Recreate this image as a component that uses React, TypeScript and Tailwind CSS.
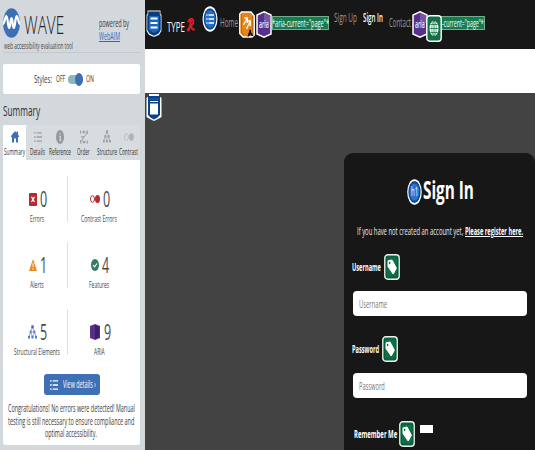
import React, { useLayoutEffect, useRef } from "react";

// Condensed text: the label is squeezed horizontally to the width of its box.
function Fit({ className = "", children }: { className?: string; children: React.ReactNode }) {
  const box = useRef<HTMLSpanElement>(null);
  const text = useRef<HTMLSpanElement>(null);
  useLayoutEffect(() => {
    const fit = () => {
      if (!box.current || !text.current) return;
      text.current.style.transform = `scaleX(${box.current.clientWidth / text.current.offsetWidth})`;
    };
    fit();
    document.fonts?.ready.then(fit);
  }, []);
  return (
    <span ref={box} className={`block shrink-0 whitespace-nowrap ${className}`}>
      <span ref={text} className="inline-block origin-left align-top">{children}</span>
    </span>
  );
}

function Svg({ className, box, children }: { className: string; box: string; children: React.ReactNode }) {
  return (
    <svg className={`block shrink-0 ${className}`} viewBox={box} preserveAspectRatio="none" fill="none">
      {children}
    </svg>
  );
}

function HeaderBadge({ className }: { className: string }) {
  return (
    <Svg className={`h-[28px] w-[16px] ${className}`} box="0 0 16 28">
      <path d="M1.5 1.5H14.5V5L15.5 6V22L13 26L8 28L3 26L.5 22V6L1.5 5Z" fill="#dfe9f2" />
      <path d="M2.2 2.5H13.8V5.5L14.7 7V21L12.5 24.5L8 26.8L3.5 24.5L1.3 21V7L2.2 5.5Z" fill="#0b3b79" />
      <path d="M3 7H13V21L8 24L3 21Z" fill="#1c66bd" />
      <path d="M4.5 9.5H11.5M4.5 14H11.5M4.5 18.5H11.5" stroke="#fff" strokeWidth="2.2" />
    </Svg>
  );
}

function AriaBadge({ className }: { className: string }) {
  return (
    <span className={`relative block h-[27px] w-[16px] shrink-0 ${className}`}>
      <Svg className="h-[27px] w-[16px]" box="0 0 16 27">
        <path d="M8 .8L15 4V23L8 26.2L1 23V4Z" fill="#55318b" stroke="#fff" strokeWidth="1.5" />
        <path d="M8 2L14.2 5V12L8 15Z" fill="#7856a3" />
      </Svg>
      <Fit className="absolute left-[3px] top-[5px] w-[10px] text-[11px] font-semibold leading-[16px] text-[#eee7fa]">aria</Fit>
    </span>
  );
}

function TagBadge({ className = "" }: { className?: string }) {
  return (
    <Svg className={`h-[26px] w-[16px] ${className}`} box="0 0 16 26">
      <rect x=".8" y=".8" width="14.4" height="24.4" rx="3" fill="#107047" stroke="#e9f3ec" strokeWidth="1.4" />
      <rect x="2.3" y="3" width="11.4" height="20" rx="1.5" stroke="#0a5636" />
      <path d="M4 6.8L8 6L12.4 14.2L9.2 20L4 12.5Z" fill="#fff" stroke="#fff" strokeLinejoin="round" />
      <ellipse cx="5.6" cy="9" rx=".8" ry="1.2" fill="#107047" />
    </Svg>
  );
}

const ListIcon = ({ className, color }: { className: string; color: string }) => (
  <Svg className={className} box="0 0 9 13">
    <path d="M0 2H1.8M3 2H9M0 6.5H1.8M3 6.5H9M0 11H1.8M3 11H9" stroke={color} strokeWidth="1.4" />
  </Svg>
);

const TreeIcon = ({ className, color, top }: { className: string; color: string; top: string }) => (
  <Svg className={className} box="0 0 9 14">
    <path d="M4.5 2L2.5 7L1 12M4.5 2L6.5 7L8 12M2.5 7H6.5M2.5 7L4.5 12L6.5 7" stroke={color} strokeWidth=".6" />
    <path d="M3.5 .5H5.5V3.5H3.5ZM1.7 5.5H3.5V8.3H1.7ZM5.5 5.5H7.3V8.3H5.5ZM0 10.7H2V13.5H0ZM3.5 10.7H5.5V13.5H3.5ZM7 10.7H9V13.5H7Z" fill={color} />
    <path d="M3.5 .5H5.5V3H3.5Z" fill={top} />
  </Svg>
);

function Tab({ box, label, text, children }: { box: string; label: string; text: string; children: React.ReactNode }) {
  return (
    <div className={`flex h-[35px] shrink-0 flex-col items-center ${box}`}>
      <div className="flex h-[21px] items-center pt-[2px]">{children}</div>
      <Fit className={`text-[8.5px] font-medium leading-[12px] text-[#30343a] ${label}`}>{text}</Fit>
    </div>
  );
}

function Stat({ pad, n, nWidth, text, label, children }: { pad: string; n: string; nWidth: string; text: string; label: string; children: React.ReactNode }) {
  return (
    <div className="w-[64px] shrink-0">
      <div className={`flex h-[32px] items-center ${pad}`}>
        <div className="flex w-[11px] shrink-0 items-center">{children}</div>
        <Fit className={`text-[21.5px] leading-[32px] text-[#484848] ${nWidth}`}>{n}</Fit>
      </div>
      <Fit className={`text-[9.5px] leading-[13px] text-[#444] ${label}`}>{text}</Fit>
    </div>
  );
}

function Sidebar() {
  return (
    <aside className="h-[450px] w-[145px] shrink-0 bg-[#d3d8dd] pl-[3px]">
      <div className="flex h-[53px] w-[137px] border-b border-[#c3c9cf]">
        <div className="w-[96px] shrink-0">
          <div className="flex h-[40px] pt-[8px]">
            <Svg className="h-[30px] w-[17px]" box="0 0 17 30">
              <ellipse cx="8.5" cy="15" rx="8.5" ry="14.8" fill="#3e6fb4" />
              <path d="M0 16C1.6 16 2 8 3.3 8C5 8 4.6 20 6.2 20C7.7 20 7 10 8.5 10C10 10 9.3 20 10.8 20C12.4 20 12 8 13.7 8C15 8 15.4 16 17 16" stroke="#fff" strokeWidth="2.2" />
            </Svg>
            <Fit className="ml-[4px] mt-[4px] w-[40px] text-[26px] font-light leading-[24px] text-[#222]">WAVE</Fit>
          </div>
          <Fit className="ml-px w-[69px] text-[8.5px] leading-[12px] text-[#3f444a]">web accessibility evaluation tool</Fit>
        </div>
        <div className="pt-[17px] text-[10px] leading-[13px]">
          <Fit className="w-[30px] text-[#35393e]">powered by</Fit>
          <Fit className="w-[21px] text-[#3465c4] [&>span]:underline">WebAIM</Fit>
        </div>
      </div>
      <div className="mt-[11px] flex h-[30px] w-[137px] items-center rounded-[2px] bg-white pl-[31px] text-[#3a3a3a]">
        <Fit className="w-[18px] text-[10.5px] leading-[14px]">Styles:</Fit>
        <Fit className="ml-[4px] w-[9px] text-[9px] leading-[14px]">OFF</Fit>
        <span className="ml-[3px] flex h-[9px] w-[15px] items-center justify-end rounded-[4px] bg-[#8bb8bf]">
          <span className="h-[13px] w-[8px] shrink-0 rounded-[50%] bg-[#3e6fb4]" />
        </span>
        <Fit className="ml-[3px] w-[8px] text-[9px] leading-[14px]">ON</Fit>
      </div>
      <h2 className="h-[31px] pt-[6px]">
        <Fit className="w-[37px] text-[15px] leading-[20px] text-[#2b3035]">Summary</Fit>
      </h2>
      <section className="h-[320px] w-[137px] overflow-hidden rounded-[2px] bg-white">
        <nav className="flex h-[35px] bg-[#d7dcdf]">
          <Tab box="w-[23px] bg-white" label="w-[21px]" text="Summary">
            <Svg className="h-[13px] w-[8px]" box="0 0 8 13">
              <path d="M0 6L4 1L5.5 3V1.5H7V4.8L8 6V7H7V12.5H5V8.5H3V12.5H1V7H0Z" fill="#3e6fb4" />
            </Svg>
          </Tab>
          <Tab box="w-[23px]" label="w-[15px]" text="Details"><ListIcon className="h-[12px] w-[8px]" color="#9ca0a2" /></Tab>
          <Tab box="w-[22px]" label="w-[22px]" text="Reference">
            <Svg className="h-[14px] w-[8px]" box="0 0 8 14">
              <ellipse cx="4" cy="7" rx="4" ry="7" fill="#94999b" />
              <path d="M4 3V4.5M3 6.3H4.3V10.3M3 10.3H5.3" stroke="#d7dcdf" strokeWidth="1.1" />
            </Svg>
          </Tab>
          <Tab box="w-[25px]" label="w-[13px]" text="Order">
            <Svg className="h-[14px] w-[8px]" box="0 0 8 14">
              <path d="M2 2H6M7 3L1.5 11M2 12H6" stroke="#999da0" strokeWidth=".9" />
              <path d="M.5 .5V3.5M3.8 .5V3.5M7.3 .5V4M.7 10V13.5M4 10.5V13.5M7.3 10.5V13.5M1 6.8H4" stroke="#999da0" strokeWidth="1.2" />
            </Svg>
          </Tab>
          <Tab box="w-[21px]" label="w-[20px]" text="Structure"><TreeIcon className="h-[13px] w-[8px]" color="#999da0" top="#999da0" /></Tab>
          <Tab box="w-[23px]" label="w-[19px]" text="Contrast">
            <Svg className="h-[8px] w-[10px]" box="0 0 10 8">
              <ellipse cx="2.5" cy="4" rx="2" ry="3.4" stroke="#b9bdbf" strokeWidth=".9" />
              <ellipse cx="7.5" cy="4" rx="2.4" ry="3.7" fill="#b0b4b7" />
            </Svg>
          </Tab>
        </nav>
        <div className="flex h-[66px] pt-[23px]">
          <Stat pad="pl-[26px]" n="0" nWidth="w-[7px]" text="Errors" label="ml-[27px] mt-[-3px] w-[14px]">
            <Svg className="h-[13px] w-[8px]" box="0 0 8 13">
              <rect width="8" height="13" rx="1" fill="#b92934" />
              <path d="M2.5 3.8L5.5 9M5.5 3.8L2.5 9" stroke="#fff" strokeWidth="1.2" />
            </Svg>
          </Stat>
          <i className="mt-[-7px] h-[46px] w-px bg-[#dedfe1]" />
          <Stat pad="pl-[22px]" n="0" nWidth="ml-[2px] w-[7px]" text="Contrast Errors" label="ml-[13px] mt-[-3px] w-[36px]">
            <Svg className="h-[8px] w-[10px]" box="0 0 10 8">
              <ellipse cx="2.5" cy="4" rx="2" ry="3.3" stroke="#b92934" />
              <ellipse cx="7.5" cy="4" rx="2.5" ry="3.9" fill="#b92934" />
            </Svg>
          </Stat>
        </div>
        <div className="flex h-[67px] pt-[23px]">
          <Stat pad="pl-[26px]" n="1" nWidth="w-[7px]" text="Alerts" label="ml-[27px] mt-[-3px] w-[14px]">
            <Svg className="h-[12px] w-[8px]" box="0 0 8 12">
              <path d="M4 0L8 12H0Z" fill="#e98a20" />
              <path d="M4 4V8M4 9.2V10.6" stroke="#fff3e0" />
            </Svg>
          </Stat>
          <i className="mt-[-7px] h-[46px] w-px bg-[#dedfe1]" />
          <Stat pad="pl-[23px]" n="4" nWidth="w-[7px]" text="Features" label="ml-[21px] mt-[-3px] w-[20px]">
            <Svg className="h-[12px] w-[8px]" box="0 0 8 12">
              <ellipse cx="4" cy="6" rx="4" ry="6" fill="#347b60" />
              <path d="M2.2 6L3.5 8L6 4.5" stroke="#fff" strokeWidth="1.2" />
            </Svg>
          </Stat>
        </div>
        <div className="flex h-[81px] pt-[23px]">
          <Stat pad="pl-[25px]" n="5" nWidth="ml-px w-[7px]" text="Structural Elements" label="ml-[11px] mt-[-3px] w-[46px]">
            <TreeIcon className="h-[14px] w-[9px]" color="#4d7fca" top="#7b4fab" />
          </Stat>
          <i className="mt-[-7px] h-[46px] w-px bg-[#dedfe1]" />
          <Stat pad="pl-[22px]" n="9" nWidth="ml-[3px] w-[7px]" text="ARIA" label="ml-[26px] mt-[-3px] w-[11px]">
            <Svg className="h-[16px] w-[10px]" box="0 0 10 16">
              <path d="M5 0L10 2V14L5 16L0 14V2Z" fill="#553084" />
              <path d="M5 1L9.3 3V13L5 15Z" fill="#3e2068" />
            </Svg>
          </Stat>
        </div>
        <div className="ml-[41px] flex h-[21px] w-[56px] items-center rounded-[3px] bg-[#3f70b5] pl-[6px]">
          <ListIcon className="h-[12px] w-[8px]" color="#fff" />
          <Fit className="ml-[5px] w-[33px] text-[10px] leading-[15px] text-white">View details ›</Fit>
        </div>
        <div className="mt-[7px] flex flex-col items-center pr-px text-[10px] leading-[12.6px] text-[#3a3a3a]">
          <Fit className="w-[127px]">Congratulations! No errors were detected! Manual</Fit>
          <Fit className="w-[126px]">testing is still necessary to ensure compliance and</Fit>
          <Fit className="w-[52px]">optimal accessibility.</Fit>
        </div>
      </section>
    </aside>
  );
}

function SiteHeader() {
  return (
    <header className="flex h-[49px] items-start overflow-hidden bg-[#171717]">
      <HeaderBadge className="ml-px mt-[9px]" />
      <Fit className="ml-[5px] mt-[17px] w-[18px] text-[14px] font-medium leading-[20px] text-white">TYPE</Fit>
      <Svg className="ml-[2px] mt-[18px] h-[14px] w-[8px]" box="0 0 10 16">
        <path d="M2 4C3 0 8 0 8 4C8 7 5 9 4 9M5 2.5C4.5 7 3.5 11 2.2 13.5C1.4 14.6 .8 14 1.2 12.8M4.5 9C6 10 6.2 14.5 9 13" stroke="#d51c2b" strokeWidth="2.5" strokeLinecap="round" />
      </Svg>
      <Svg className="ml-[7px] mt-[6px] h-[26px] w-[16px]" box="0 0 16 26">
        <ellipse cx="8" cy="13" rx="7.5" ry="12.7" fill="#fff" />
        <ellipse cx="8" cy="13" rx="6.3" ry="10.8" fill="#0d4a94" />
        <ellipse cx="8" cy="13" rx="5.2" ry="9" fill="#236fc9" />
        <path d="M4.3 9H5.5M6.5 9H12M4.3 13H5.5M6.5 13H12M4.3 17H5.5M6.5 17H12" stroke="#fff" strokeWidth="1.7" />
      </Svg>
      <Fit className="ml-[2px] mt-[14px] w-[18px] text-[12px] leading-[18px] text-[#9a9a9a]">Home</Fit>
      <Svg className="ml-px mt-[11px] h-[27px] w-[16px]" box="0 0 16 27">
        <path d="M2.5 1H12L15.3 5V24L13 26H4L.7 22.5V3Z" fill="#e6841a" stroke="#fff" strokeWidth="1.3" />
        <path d="M2.5 4V21L4.5 24M13.5 5V23" stroke="#b85d0b" strokeWidth=".8" />
        <path d="M4.5 14L8 7.5M5.5 7H8.3V12M7.5 18L11 10.5M8.7 10H11.3V15" stroke="#fff" strokeWidth="1.3" />
        <path d="M10.8 18L12.3 19.5L12 21L14.5 25H12.6L11.5 23.5L9.7 25.5H8.4L10 21Z" fill="#111" />
      </Svg>
      <AriaBadge className="ml-px mt-[11px]" />
      <Fit className="mt-[16px] h-[14px] w-[57px] overflow-hidden bg-[#167b50] text-[10.5px] leading-[14px] text-white outline outline-1 outline-[#75aa8b] -outline-offset-1">*aria-current="page"*</Fit>
      <Fit className="ml-[5px] mt-[9px] w-[23px] text-[12px] leading-[18px] text-[#9a9a9a]">Sign Up</Fit>
      <Fit className="ml-[6px] mt-[9px] w-[20px] text-[12px] font-semibold leading-[18px] text-white">Sign In</Fit>
      <Fit className="ml-[6px] mt-[14px] w-[22px] text-[12px] leading-[18px] text-[#9a9a9a]">Contact</Fit>
      <AriaBadge className="ml-px mt-[11px]" />
      <Svg className="relative ml-[-2px] mt-[15px] h-[27px] w-[16px]" box="0 0 16 27">
        <rect x=".8" y=".8" width="14.4" height="25.4" rx="3" fill="#107047" stroke="#fff" strokeWidth="1.4" />
        <ellipse cx="8" cy="13.5" rx="4.5" ry="7.5" fill="#fff" />
        <path d="M8 6V21M3.5 13.5H12.5M4.5 9.5H11.5M4.5 17.5H11.5" stroke="#107047" strokeWidth=".8" />
        <ellipse cx="8" cy="13.5" rx="2.2" ry="7.5" stroke="#107047" strokeWidth=".6" />
      </Svg>
      <span className="ml-[-2px] mt-[16px] flex h-[14px] w-[45px] overflow-hidden bg-[#167b50] pl-[2px] outline outline-1 outline-[#75aa8b] -outline-offset-1">
        <Fit className="w-[42px] text-[10.5px] leading-[14px] text-white">-current="page"*</Fit>
      </span>
    </header>
  );
}

function SignInCard() {
  return (
    <section className="ml-[199px] h-[297px] w-[191px] rounded-t-[9px] bg-[#171717] pt-[20px]">
      <div className="flex h-[49px] items-start pl-[63px]">
        <span className="relative mt-[6px] block h-[26px] w-[15px] shrink-0">
          <Svg className="h-[26px] w-[15px]" box="0 0 15 26">
            <ellipse cx="7.5" cy="13" rx="7.3" ry="12.8" fill="#fff" />
            <ellipse cx="7.5" cy="13" rx="6.1" ry="10.9" fill="#0b438b" />
            <ellipse cx="7.5" cy="13" rx="4.9" ry="8.8" fill="#2474d0" />
          </Svg>
          <Fit className="absolute left-[4px] top-[5px] w-[7px] text-[12px] leading-[16px] text-white">h1</Fit>
        </span>
        <Fit className="ml-px w-[51px] text-[25.5px] font-bold leading-[32px] text-white">Sign In</Fit>
      </div>
      <p className="flex h-[18px] items-center pl-[13px] text-[10.5px] leading-[18px] text-[#eee]">
        <Fit className="w-[106px]">If you have not created an account yet,</Fit>
        <Fit className="ml-[2px] w-[58px] font-bold text-white [&>span]:underline">Please register here.</Fit>
      </p>
      <label className="mt-[13px] flex h-[27px] items-center pl-[8px]">
        <Fit className="w-[29px] text-[10.5px] font-bold leading-[18px] text-white">Username</Fit>
        <TagBadge className="ml-[3px]" />
      </label>
      <div className="ml-[9px] mt-[11px] flex h-[25px] w-[174px] items-center rounded-[4px] bg-white pl-[6px]">
        <Fit className="w-[28px] text-[11px] leading-[18px] text-[#777]">Username</Fit>
      </div>
      <label className="mt-[20px] flex h-[26px] items-center pl-[8px]">
        <Fit className="w-[27px] text-[10.5px] font-bold leading-[18px] text-white">Password</Fit>
        <TagBadge className="ml-[3px]" />
      </label>
      <div className="ml-[9px] mt-[11px] flex h-[25px] w-[174px] items-center rounded-[4px] bg-white pl-[6px]">
        <Fit className="w-[26px] text-[11px] leading-[18px] text-[#777]">Password</Fit>
      </div>
      <label className="mt-[23px] flex h-[26px] items-center pl-[10px]">
        <Fit className="w-[43px] text-[10.5px] font-bold leading-[18px] text-white">Remember Me</Fit>
        <TagBadge className="ml-[2px]" />
        <span className="mb-[10px] ml-[5px] h-[8px] w-[13px] bg-white" />
      </label>
    </section>
  );
}

export default function App() {
  return (
    <div className="flex h-[450px] w-[535px] overflow-hidden font-['Open_Sans','Noto_Sans',sans-serif]">
      <Sidebar />
      <main className="h-[450px] w-[390px] shrink-0 bg-[#434343]">
        <SiteHeader />
        <div className="h-[44px] bg-white" />
        <div className="h-[60px] pl-px pt-px">
          <Svg className="h-[27px] w-[16px]" box="0 0 16 27">
            <path d="M3 0H13V2L15.5 4V23L12 25L8 27L4 25L.5 23V4L3 2Z" fill="#fff" />
            <path d="M2 2H14V21L11.5 23.5L8 25.5L4.5 23.5L2 21Z" fill="#0b438b" />
            <path d="M3 5H13" stroke="#2763ad" />
            <path d="M4 9.5H12V20.5H4Z" fill="#fff" />
            <path d="M4 7.5H12" stroke="#fff" />
          </Svg>
        </div>
        <SignInCard />
      </main>
    </div>
  );
}
